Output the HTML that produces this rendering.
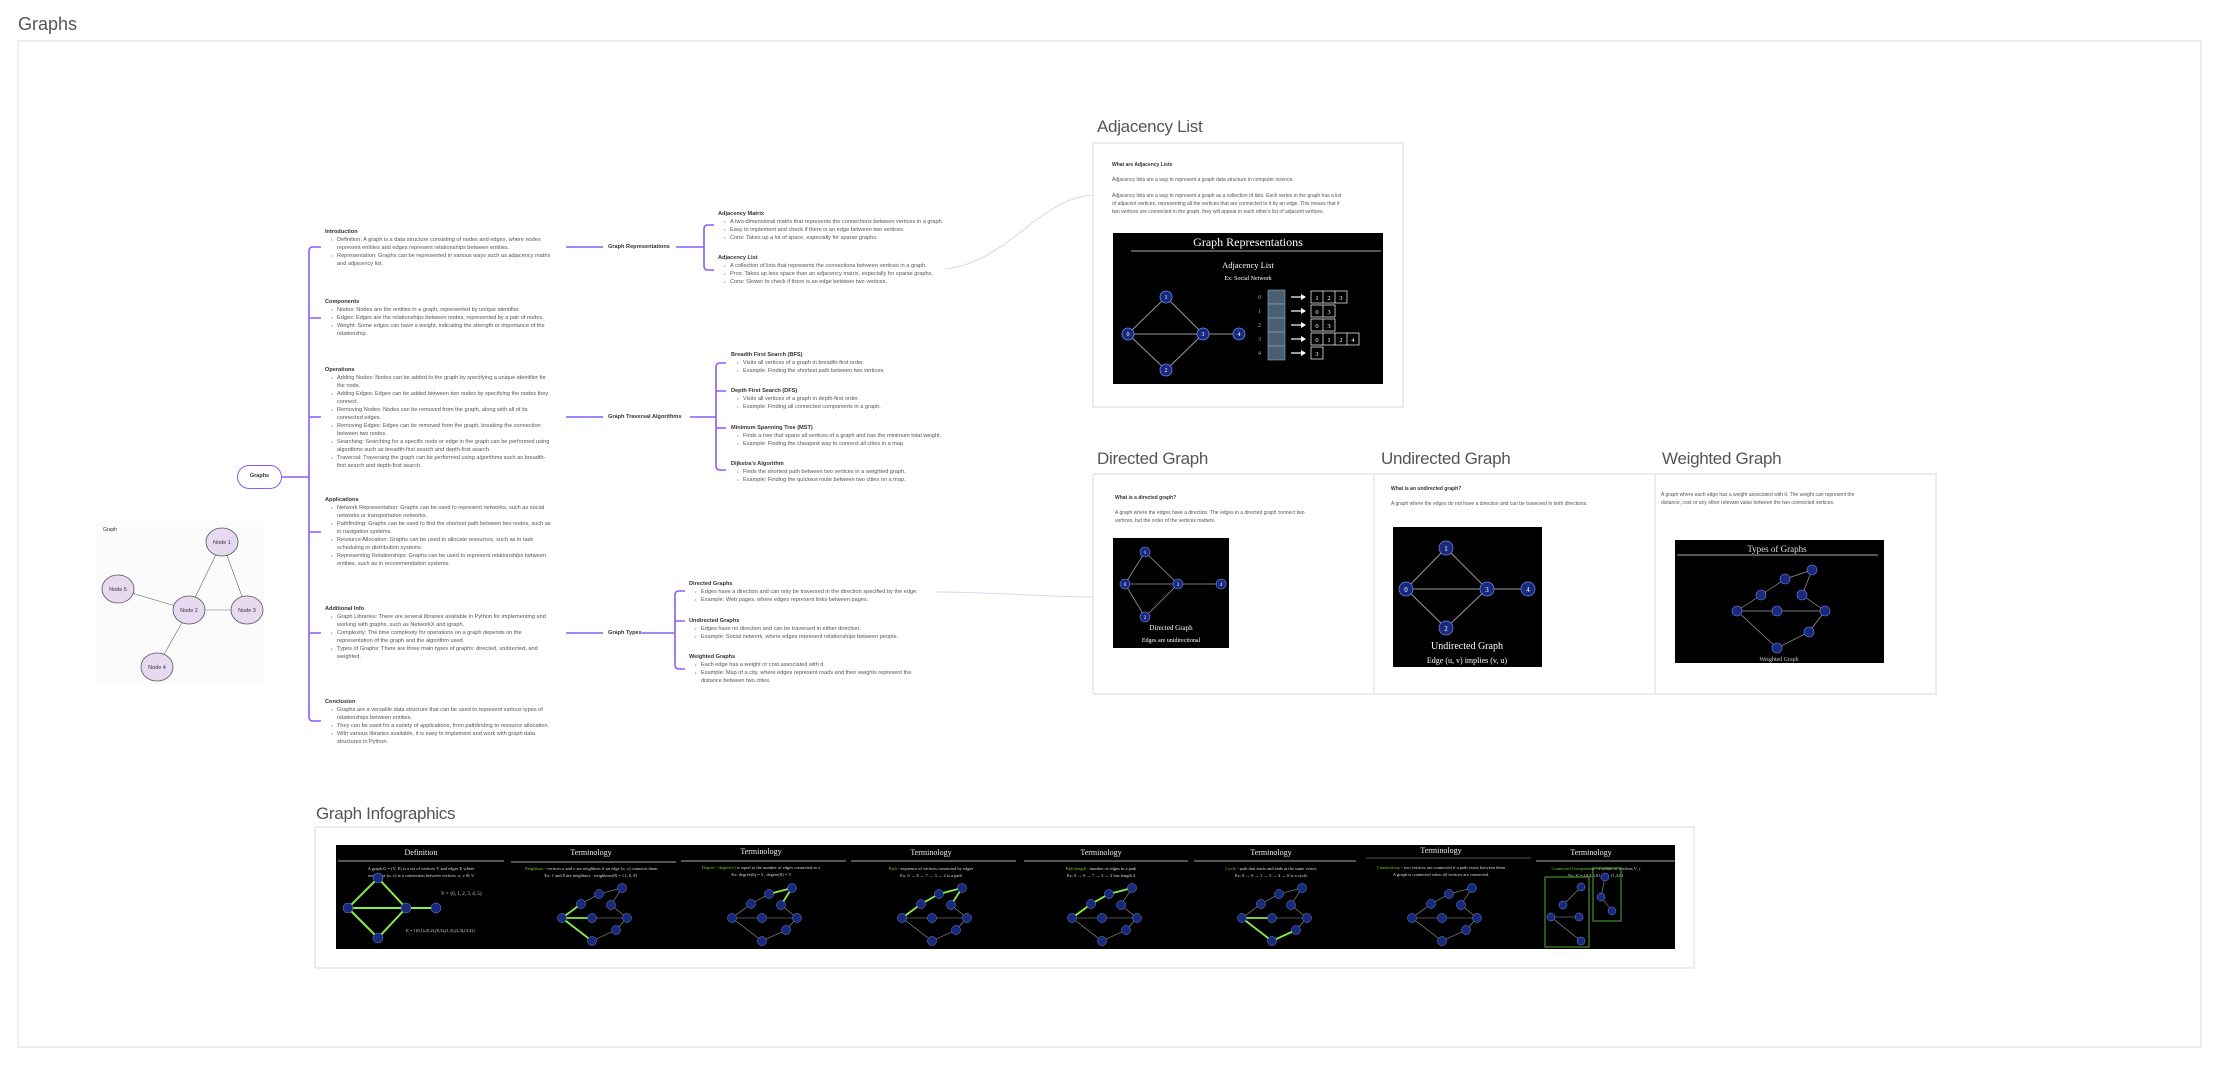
<!DOCTYPE html>
<html><head><meta charset="utf-8"><style>
*{margin:0;padding:0;box-sizing:border-box}
body{width:2223px;height:1065px;background:#fff;position:relative;overflow:hidden;font-family:"Liberation Sans",sans-serif;color:#444}
.a{position:absolute}
.h{font-size:17px;color:#555;font-family:"Liberation Sans",sans-serif;letter-spacing:-0.3px}
.card{position:absolute;border:2px solid #ececec;background:#fff}
.t{position:absolute;font-size:5.6px;line-height:8px;color:#555;white-space:nowrap}
.t b{color:#333;font-weight:bold}
.t .li{padding-left:12px;position:relative}
.t .li:before{content:"•";position:absolute;left:6px;font-size:4px}
.t .ind{padding-left:12px}
</style></head><body>

<div class="a" style="left:18px;top:14px;font-size:18px;color:#555">Graphs</div>
<div class="a" style="left:17px;top:40px;width:2185px;height:1008px;border:2px solid #ececec"></div>

<svg class="a" style="left:0;top:0" width="2223" height="1065">
<g stroke="#8a5cf6" stroke-width="1.6" fill="none">
<path d="M282 477 H309"/>
<path d="M321 247 H313 Q309 247 309 251 V717 Q309 721 313 721 H321"/>
<path d="M309 318 H321 M309 417 H321 M309 532 H321 M309 633 H321"/>
<path d="M566 247 H603 M676 247 H704"/>
<path d="M714 225 H708 Q704 225 704 229 V266 Q704 270 708 270 H714"/>
<path d="M566 417 H603 M690 417 H716"/>
<path d="M726 363 H720 Q716 363 716 367 V466 Q716 470 720 470 H726 M716 391 H726 M716 428 H726"/>
<path d="M566 633 H603 M642 633 H675"/>
<path d="M685 591 H679 Q675 591 675 595 V665 Q675 669 679 669 H685 M675 621 H685"/>
</g>
<path d="M945 269 C1010 262 1040 195 1097 195" stroke="#d8d4f4" stroke-width="1" fill="none"/>
<path d="M935 592 C1000 592 1040 597 1097 597" stroke="#d8d4f4" stroke-width="1" fill="none"/>
</svg>
<div class="a" style="left:237px;top:465px;width:45px;height:24px;border:1.6px solid #8a5cf6;border-radius:12px;font-size:5.5px;font-weight:bold;text-align:center;line-height:21px;color:#333">Graphs</div>

<div class="t" style="left:325px;top:228px"><b>Introduction</b>
<div class="li">Definition: A graph is a data structure consisting of nodes and edges, where nodes</div><div class="ind">represent entities and edges represent relationships between entities.</div>
<div class="li">Representation: Graphs can be represented in various ways such as adjacency matrix</div><div class="ind">and adjacency list.</div></div>

<div class="t" style="left:325px;top:298px"><b>Components</b>
<div class="li">Nodes: Nodes are the entities in a graph, represented by unique identifier.</div>
<div class="li">Edges: Edges are the relationships between nodes, represented by a pair of nodes.</div>
<div class="li">Weight: Some edges can have a weight, indicating the strength or importance of the</div><div class="ind">relationship.</div></div>

<div class="t" style="left:325px;top:366px"><b>Operations</b>
<div class="li">Adding Nodes: Nodes can be added to the graph by specifying a unique identifier for</div><div class="ind">the node.</div>
<div class="li">Adding Edges: Edges can be added between two nodes by specifying the nodes they</div><div class="ind">connect.</div>
<div class="li">Removing Nodes: Nodes can be removed from the graph, along with all of its</div><div class="ind">connected edges.</div>
<div class="li">Removing Edges: Edges can be removed from the graph, breaking the connection</div><div class="ind">between two nodes.</div>
<div class="li">Searching: Searching for a specific node or edge in the graph can be performed using</div><div class="ind">algorithms such as breadth-first search and depth-first search.</div>
<div class="li">Traversal: Traversing the graph can be performed using algorithms such as breadth-</div><div class="ind">first search and depth-first search.</div></div>

<div class="t" style="left:325px;top:496px"><b>Applications</b>
<div class="li">Network Representation: Graphs can be used to represent networks, such as social</div><div class="ind">networks or transportation networks.</div>
<div class="li">Pathfinding: Graphs can be used to find the shortest path between two nodes, such as</div><div class="ind">in navigation systems.</div>
<div class="li">Resource Allocation: Graphs can be used to allocate resources, such as in task</div><div class="ind">scheduling or distribution systems.</div>
<div class="li">Representing Relationships: Graphs can be used to represent relationships between</div><div class="ind">entities, such as in recommendation systems.</div></div>

<div class="t" style="left:325px;top:605px"><b>Additional Info</b>
<div class="li">Graph Libraries: There are several libraries available in Python for implementing and</div><div class="ind">working with graphs, such as NetworkX and igraph.</div>
<div class="li">Complexity: The time complexity for operations on a graph depends on the</div><div class="ind">representation of the graph and the algorithm used.</div>
<div class="li">Types of Graphs: There are three main types of graphs: directed, undirected, and</div><div class="ind">weighted.</div></div>

<div class="t" style="left:325px;top:698px"><b>Conclusion</b>
<div class="li">Graphs are a versatile data structure that can be used to represent various types of</div><div class="ind">relationships between entities.</div>
<div class="li">They can be used for a variety of applications, from pathfinding to resource allocation.</div>
<div class="li">With various libraries available, it is easy to implement and work with graph data</div><div class="ind">structures in Python.</div></div>

<div class="t" style="left:608px;top:243px"><b>Graph Representations</b></div>
<div class="t" style="left:608px;top:413px"><b>Graph Traversal Algorithms</b></div>
<div class="t" style="left:608px;top:629px"><b>Graph Types</b></div>

<div class="t" style="left:718px;top:210px"><b>Adjacency Matrix</b>
<div class="li">A two-dimensional matrix that represents the connections between vertices in a graph.</div>
<div class="li">Easy to implement and check if there is an edge between two vertices.</div>
<div class="li">Cons: Takes up a lot of space, especially for sparse graphs.</div></div>
<div class="t" style="left:718px;top:254px"><b>Adjacency List</b>
<div class="li">A collection of lists that represents the connections between vertices in a graph.</div>
<div class="li">Pros: Takes up less space than an adjacency matrix, especially for sparse graphs.</div>
<div class="li">Cons: Slower to check if there is an edge between two vertices.</div></div>

<div class="t" style="left:731px;top:351px"><b>Breadth First Search (BFS)</b>
<div class="li">Visits all vertices of a graph in breadth-first order.</div>
<div class="li">Example: Finding the shortest path between two vertices.</div></div>
<div class="t" style="left:731px;top:387px"><b>Depth First Search (DFS)</b>
<div class="li">Visits all vertices of a graph in depth-first order.</div>
<div class="li">Example: Finding all connected components in a graph.</div></div>
<div class="t" style="left:731px;top:424px"><b>Minimum Spanning Tree (MST)</b>
<div class="li">Finds a tree that spans all vertices of a graph and has the minimum total weight.</div>
<div class="li">Example: Finding the cheapest way to connect all cities in a map.</div></div>
<div class="t" style="left:731px;top:460px"><b>Dijkstra's Algorithm</b>
<div class="li">Finds the shortest path between two vertices in a weighted graph.</div>
<div class="li">Example: Finding the quickest route between two cities on a map.</div></div>

<div class="t" style="left:689px;top:580px"><b>Directed Graphs</b>
<div class="li">Edges have a direction and can only be traversed in the direction specified by the edge.</div>
<div class="li">Example: Web pages, where edges represent links between pages.</div></div>
<div class="t" style="left:689px;top:617px"><b>Undirected Graphs</b>
<div class="li">Edges have no direction and can be traversed in either direction.</div>
<div class="li">Example: Social network, where edges represent relationships between people.</div></div>
<div class="t" style="left:689px;top:653px"><b>Weighted Graphs</b>
<div class="li">Each edge has a weight or cost associated with it.</div>
<div class="li">Example: Map of a city, where edges represent roads and their weights represent the</div><div class="ind">distance between two cities.</div></div>

<svg class="a" style="left:95px;top:521px" width="170" height="164">
<rect width="170" height="164" fill="#fbfbfb"/>
<text x="8" y="10" font-size="5" font-family="Liberation Sans" fill="#333">Graph</text>
<g stroke="#666" stroke-width="0.6">
<line x1="127" y1="21" x2="94" y2="89"/><line x1="127" y1="21" x2="152" y2="89"/><line x1="23" y1="68" x2="94" y2="89"/><line x1="94" y1="89" x2="152" y2="89"/><line x1="94" y1="89" x2="62" y2="146"/></g>
<g fill="#e6d9f0" stroke="#555" stroke-width="0.8">
<ellipse cx="127" cy="21" rx="16" ry="14"/><ellipse cx="23" cy="68" rx="16" ry="14"/><ellipse cx="94" cy="89" rx="16" ry="14"/><ellipse cx="152" cy="89" rx="16" ry="14"/><ellipse cx="62" cy="146" rx="16" ry="14"/></g>
<g font-size="5.5" font-family="Liberation Sans" fill="#333" text-anchor="middle">
<text x="127" y="23">Node 1</text><text x="23" y="70">Node 5</text><text x="94" y="91">Node 2</text><text x="152" y="91">Node 3</text><text x="62" y="148">Node 4</text></g>
</svg>

<div class="a h" style="left:1097px;top:117px">Adjacency List</div>
<div class="card" style="left:1092px;top:142px;width:312px;height:266px"></div>
<div class="t" style="left:1112px;top:161px;font-size:5px"><b>What are Adjacency Lists</b></div>
<div class="t" style="left:1112px;top:176px;font-size:5px">Adjacency lists are a way to represent a graph data structure in computer science.</div>
<div class="t" style="left:1112px;top:192px;font-size:5px">Adjacency lists are a way to represent a graph as a collection of lists. Each vertex in the graph has a list<br>of adjacent vertices, representing all the vertices that are connected to it by an edge. This means that if<br>two vertices are connected in the graph, they will appear in each other's list of adjacent vertices.</div>
<svg class="a" style="left:1113px;top:233px" width="270" height="151" viewBox="0 0 270 151">
<rect width="270" height="151" fill="#000"/>
<g font-family="Liberation Serif" fill="#fff" text-anchor="middle">
<text x="135" y="13" font-size="12">Graph Representations</text>
<text x="135" y="35" font-size="8.5">Adjacency List</text>
<text x="135" y="47" font-size="6">Ex: Social Network</text></g>
<line x1="18" y1="18" x2="268" y2="18" stroke="#aaa" stroke-width="1"/>
<g stroke="#999" stroke-width="1"><line x1="15" y1="101" x2="126" y2="101"/><line x1="15" y1="101" x2="53" y2="64"/><line x1="53" y1="64" x2="90" y2="101"/><line x1="15" y1="101" x2="53" y2="137"/><line x1="53" y1="137" x2="90" y2="101"/></g>
<g fill="#1a2a7a" stroke="#6a8aff" stroke-width="0.8"><circle cx="53" cy="64" r="6"/><circle cx="15" cy="101" r="6"/><circle cx="90" cy="101" r="6"/><circle cx="126" cy="101" r="6"/><circle cx="53" cy="137" r="6"/></g>
<g fill="#fff" font-size="6" font-family="Liberation Serif" text-anchor="middle"><text x="53" y="66">1</text><text x="15" y="103">0</text><text x="90" y="103">3</text><text x="126" y="103">4</text><text x="53" y="139">2</text></g>
<g fill="#4a6070" stroke="#8ac" stroke-width="0.6"><rect x="155" y="57" width="17" height="14"/><rect x="155" y="71" width="17" height="14"/><rect x="155" y="85" width="17" height="14"/><rect x="155" y="99" width="17" height="14"/><rect x="155" y="113" width="17" height="14"/></g>
<g fill="#8ac" font-size="6" font-family="Liberation Serif"><text x="145" y="66">0</text><text x="145" y="80">1</text><text x="145" y="94">2</text><text x="145" y="108">3</text><text x="145" y="122">4</text></g>
<g stroke="#fff" stroke-width="1.2"><line x1="178" y1="64" x2="188" y2="64"/><line x1="178" y1="78" x2="188" y2="78"/><line x1="178" y1="92" x2="188" y2="92"/><line x1="178" y1="106" x2="188" y2="106"/><line x1="178" y1="120" x2="188" y2="120"/></g>
<g fill="#fff"><path d="M188 61 L193 64 L188 67Z"/><path d="M188 75 L193 78 L188 81Z"/><path d="M188 89 L193 92 L188 95Z"/><path d="M188 103 L193 106 L188 109Z"/><path d="M188 117 L193 120 L188 123Z"/></g>
<g stroke="#fff" stroke-width="0.7" fill="none">
<rect x="198" y="58" width="36" height="12"/><line x1="210" y1="58" x2="210" y2="70"/><line x1="222" y1="58" x2="222" y2="70"/>
<rect x="198" y="72" width="24" height="12"/><line x1="210" y1="72" x2="210" y2="84"/>
<rect x="198" y="86" width="24" height="12"/><line x1="210" y1="86" x2="210" y2="98"/>
<rect x="198" y="100" width="48" height="12"/><line x1="210" y1="100" x2="210" y2="112"/><line x1="222" y1="100" x2="222" y2="112"/><line x1="234" y1="100" x2="234" y2="112"/>
<rect x="198" y="114" width="12" height="12"/></g>
<g fill="#fff" font-size="6.5" font-family="Liberation Serif" text-anchor="middle"><text x="204" y="67">1</text><text x="216" y="67">2</text><text x="228" y="67">3</text><text x="204" y="81">0</text><text x="216" y="81">3</text><text x="204" y="95">0</text><text x="216" y="95">3</text><text x="204" y="109">0</text><text x="216" y="109">1</text><text x="228" y="109">2</text><text x="240" y="109">4</text><text x="204" y="123">3</text></g>
</svg>

<div class="a h" style="left:1097px;top:449px">Directed Graph</div>
<div class="a h" style="left:1381px;top:449px">Undirected Graph</div>
<div class="a h" style="left:1662px;top:449px">Weighted Graph</div>
<div class="card" style="left:1092px;top:473px;width:283px;height:222px"></div>
<div class="card" style="left:1373px;top:473px;width:283px;height:222px"></div>
<div class="card" style="left:1654px;top:473px;width:283px;height:222px"></div>
<div class="t" style="left:1115px;top:494px;font-size:5px"><b>What is a directed graph?</b></div>
<div class="t" style="left:1115px;top:509px;font-size:5px">A graph where the edges have a direction. The edges in a directed graph connect two<br>vertices, but the order of the vertices matters.</div>
<div class="t" style="left:1391px;top:485px;font-size:5px"><b>What is an undirected graph?</b></div>
<div class="t" style="left:1391px;top:500px;font-size:5px">A graph where the edges do not have a direction and can be traversed in both directions.</div>
<div class="t" style="left:1661px;top:491px;font-size:5px">A graph where each edge has a weight associated with it. The weight can represent the<br>distance, cost or any other relevant value between the two connected vertices.</div>

<svg class="a" style="left:1113px;top:538px" width="116" height="110" viewBox="0 0 116 110">
<rect width="116" height="110" fill="#000"/>
<g stroke="#999" stroke-width="0.8"><line x1="12" y1="46" x2="108" y2="46"/><line x1="12" y1="46" x2="32" y2="14"/><line x1="32" y1="14" x2="65" y2="46"/><line x1="12" y1="46" x2="32" y2="79"/><line x1="32" y1="79" x2="65" y2="46"/></g>
<g fill="#1a2a7a" stroke="#6a8aff" stroke-width="0.6"><circle cx="32" cy="14" r="5"/><circle cx="12" cy="46" r="5"/><circle cx="65" cy="46" r="5"/><circle cx="108" cy="46" r="5"/><circle cx="32" cy="79" r="5"/></g>
<g fill="#fff" font-family="Liberation Serif" text-anchor="middle" font-size="5"><text x="32" y="16">1</text><text x="12" y="48">0</text><text x="65" y="48">3</text><text x="108" y="48">4</text><text x="32" y="81">2</text>
<text x="58" y="92" font-size="7">Directed Graph</text><text x="58" y="104" font-size="6">Edges are unidirectional</text></g>
</svg>

<svg class="a" style="left:1393px;top:527px" width="149" height="140" viewBox="0 0 149 140">
<rect width="149" height="140" fill="#000"/>
<g stroke="#999" stroke-width="1"><line x1="13" y1="62" x2="135" y2="62"/><line x1="13" y1="62" x2="53" y2="21"/><line x1="53" y1="21" x2="94" y2="62"/><line x1="13" y1="62" x2="53" y2="101"/><line x1="53" y1="101" x2="94" y2="62"/></g>
<g fill="#1a2a7a" stroke="#6a8aff" stroke-width="0.7"><circle cx="53" cy="21" r="7"/><circle cx="13" cy="62" r="7"/><circle cx="94" cy="62" r="7"/><circle cx="135" cy="62" r="7"/><circle cx="53" cy="101" r="7"/></g>
<g fill="#fff" font-family="Liberation Serif" text-anchor="middle" font-size="7"><text x="53" y="24">1</text><text x="13" y="65">0</text><text x="94" y="65">3</text><text x="135" y="65">4</text><text x="53" y="104">2</text>
<text x="74" y="122" font-size="10">Undirected Graph</text><text x="74" y="136" font-size="8">Edge (u, v) implies (v, u)</text></g>
</svg>

<svg class="a" style="left:1675px;top:540px" width="209" height="123" viewBox="0 0 209 123">
<rect width="209" height="123" fill="#000"/>
<text x="102" y="12" font-family="Liberation Serif" font-size="9" fill="#ddd" text-anchor="middle">Types of Graphs</text>
<line x1="2" y1="15" x2="203" y2="15" stroke="#aaa"/>
<g stroke="#999" stroke-width="0.7"><line x1="62" y1="71" x2="86" y2="55"/><line x1="86" y1="55" x2="110" y2="39"/><line x1="110" y1="39" x2="137" y2="30"/><line x1="137" y1="30" x2="127" y2="55"/><line x1="127" y1="55" x2="150" y2="71"/><line x1="62" y1="71" x2="150" y2="71"/><line x1="150" y1="71" x2="134" y2="92"/><line x1="134" y1="92" x2="102" y2="108"/><line x1="102" y1="108" x2="62" y2="71"/></g>
<g fill="#1a2a7a" stroke="#6a8aff" stroke-width="0.6"><circle cx="62" cy="71" r="5"/><circle cx="86" cy="55" r="5"/><circle cx="110" cy="39" r="5"/><circle cx="137" cy="30" r="5"/><circle cx="127" cy="55" r="5"/><circle cx="102" cy="71" r="5"/><circle cx="150" cy="71" r="5"/><circle cx="134" cy="92" r="5"/><circle cx="102" cy="108" r="5"/></g>
<text x="104" y="121" font-family="Liberation Serif" font-size="6" fill="#ccc" text-anchor="middle">Weighted Graph</text>
</svg>

<div class="a h" style="left:316px;top:804px">Graph Infographics</div>
<div class="card" style="left:314px;top:826px;width:1381px;height:143px"></div>
<svg class="a" style="left:336px;top:845px" width="1339" height="104" viewBox="0 0 1339 104">
<defs>
<g id="e"><g stroke="#999" stroke-width="0.6"><line x1="57" y1="73" x2="76" y2="59"/><line x1="76" y1="59" x2="94" y2="49"/><line x1="94" y1="49" x2="117" y2="43"/><line x1="117" y1="43" x2="106" y2="60"/><line x1="106" y1="60" x2="122" y2="73"/><line x1="57" y1="73" x2="122" y2="73"/><line x1="122" y1="73" x2="111" y2="85"/><line x1="111" y1="85" x2="87" y2="96"/><line x1="87" y1="96" x2="57" y2="73"/></g></g>
<g id="n"><g fill="#1a2a7a" stroke="#6a8aff" stroke-width="0.5"><circle cx="57" cy="73" r="4.5"/><circle cx="76" cy="59" r="4.5"/><circle cx="94" cy="49" r="4.5"/><circle cx="117" cy="43" r="4.5"/><circle cx="106" cy="60" r="4.5"/><circle cx="87" cy="73" r="4.5"/><circle cx="122" cy="73" r="4.5"/><circle cx="111" cy="85" r="4.5"/><circle cx="87" cy="96" r="4.5"/></g></g>
</defs>
<rect width="1339" height="104" fill="#000"/>
<g font-family="Liberation Serif" fill="#eee" font-size="8" text-anchor="middle">
<text x="85" y="10">Definition</text><text x="255" y="10">Terminology</text><text x="425" y="9">Terminology</text><text x="595" y="10">Terminology</text><text x="765" y="10">Terminology</text><text x="935" y="10">Terminology</text><text x="1105" y="8">Terminology</text><text x="1255" y="10">Terminology</text></g>
<g stroke="#aaa" stroke-width="1"><line x1="2" y1="16" x2="168" y2="16"/><line x1="175" y1="17" x2="340" y2="17"/><line x1="345" y1="16" x2="510" y2="16"/><line x1="515" y1="16" x2="680" y2="16"/><line x1="688" y1="16" x2="852" y2="16"/><line x1="858" y1="16" x2="1020" y2="16"/><line x1="1030" y1="13" x2="1195" y2="13" stroke="#555"/><line x1="1200" y1="16" x2="1339" y2="16"/></g>
<g font-family="Liberation Serif" fill="#ddd" font-size="4.5" text-anchor="middle">
<text x="85" y="25">A graph G = (V, E) is a set of vertices V and edges E where</text><text x="85" y="32">each edge (u, v) is a connection between vertices. u, v ∈ V</text>
<text x="255" y="25"><tspan fill="#7c3">Neighbors</tspan> - vertices u and v are neighbors if an edge (u, v) connects them</text><text x="255" y="32">Ex: 1 and 8 are neighbors · neighbors(8) = {1, 6, 8}</text>
<text x="425" y="24"><tspan fill="#7c3">Degree - degree(v)</tspan> is equal to the number of edges connected to v</text><text x="425" y="31">Ex: degree(6) = 3 , degree(8) = 3</text>
<text x="595" y="25"><tspan fill="#7c3">Path</tspan> - sequence of vertices connected by edges</text><text x="595" y="32">Ex: 0 → 6 → 7 → 3 → 2 is a path</text>
<text x="765" y="25"><tspan fill="#7c3">Path length</tspan> - number of edges in a path</text><text x="765" y="32">Ex: 0 → 6 → 7 → 3 → 2 has length 4</text>
<text x="935" y="25"><tspan fill="#7c3">Cycle</tspan> - path that starts and ends at the same vertex</text><text x="935" y="32">Ex: 0 → 6 → 1 → 5 → 4 → 0 is a cycle</text>
<text x="1105" y="24"><tspan fill="#7c3">Connectivity</tspan> - two vertices are connected if a path exists between them</text><text x="1105" y="31">A graph is connected when all vertices are connected.</text>
<text x="1260" y="25"><tspan fill="#7c3">Connected Components</tspan> - a subset of vertices V_i</text><text x="1260" y="32">Ex: V = {0,4,5,8}, V = {1,3,6}</text></g>
<g stroke="#8e4" stroke-width="2"><line x1="12" y1="63" x2="100" y2="63"/><line x1="12" y1="63" x2="42" y2="33"/><line x1="42" y1="33" x2="70" y2="63"/><line x1="12" y1="63" x2="42" y2="93"/><line x1="42" y1="93" x2="70" y2="63"/></g>
<g fill="#1a2a7a" stroke="#6a8aff" stroke-width="0.5"><circle cx="42" cy="33" r="5"/><circle cx="12" cy="63" r="5"/><circle cx="70" cy="63" r="5"/><circle cx="100" cy="63" r="5"/><circle cx="42" cy="93" r="5"/></g>
<text x="105" y="50" font-family="Liberation Serif" font-size="5" fill="#ddd">V = {0, 1, 2, 3, 4, 5}</text>
<text x="70" y="87" font-family="Liberation Serif" font-size="4.5" fill="#ddd">E = {(0,1),(0,2),(0,3),(1,3),(2,3),(3,4)}</text>
<g transform="translate(169 0)"><use href="#e"/><path d="M57 73 L76 59 M57 73 L87 73 M57 73 L87 96" stroke="#8e4" stroke-width="1.8" fill="none"/><use href="#n"/></g>
<g transform="translate(339 0)"><use href="#e"/><path d="M94 49 L117 43 L106 60" stroke="#8e4" stroke-width="1.8" fill="none"/><use href="#n"/></g>
<g transform="translate(509 0)"><use href="#e"/><path d="M57 73 L76 59 L94 49 L117 43 L106 60" stroke="#8e4" stroke-width="1.8" fill="none"/><use href="#n"/></g>
<g transform="translate(679 0)"><use href="#e"/><path d="M57 73 L76 59 L94 49 L117 43" stroke="#8e4" stroke-width="1.8" fill="none"/><use href="#n"/></g>
<g transform="translate(849 0)"><use href="#e"/><path d="M57 73 L87 73 M57 73 L87 96 L111 85" stroke="#8e4" stroke-width="1.8" fill="none"/><use href="#n"/></g>
<g transform="translate(1019 0)"><use href="#e"/><use href="#n"/></g>
<rect x="1209" y="32" width="44" height="70" fill="none" stroke="#5a3" stroke-width="1"/>
<rect x="1257" y="23" width="28" height="53" fill="none" stroke="#5a3" stroke-width="1"/>
<g stroke="#999" stroke-width="0.6"><line x1="1215" y1="72" x2="1243" y2="72"/><line x1="1227" y1="60" x2="1245" y2="42"/><line x1="1215" y1="72" x2="1245" y2="96"/><line x1="1269" y1="32" x2="1265" y2="52"/><line x1="1265" y1="52" x2="1276" y2="66"/></g>
<g fill="#1a2a7a" stroke="#6a8aff" stroke-width="0.5"><circle cx="1215" cy="72" r="4"/><circle cx="1243" cy="72" r="4"/><circle cx="1227" cy="60" r="4"/><circle cx="1245" cy="42" r="4"/><circle cx="1245" cy="96" r="4"/><circle cx="1269" cy="32" r="4"/><circle cx="1265" cy="52" r="4"/><circle cx="1276" cy="66" r="4"/></g>
</svg>
</body></html>
